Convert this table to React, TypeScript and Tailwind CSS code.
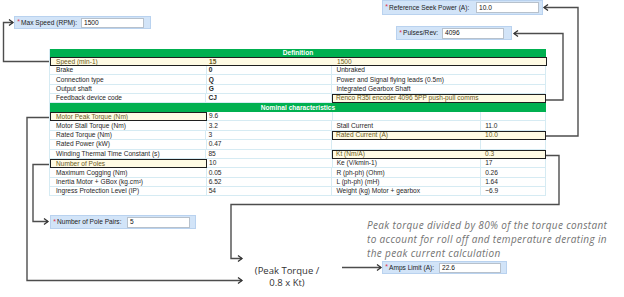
import React from 'react';

type Cell = { t: string; cls: string; b?: boolean };
type Seg = { hl?: boolean; cells: Cell[] };

const C1 = 'w-[157px] pl-[6px]';
const C2 = 'w-[126px] pl-[2px]';
const C3 = 'w-[149px] pl-[4px]';
const C4 = 'w-[65px] pl-[4px]';
const C34 = 'w-[214px] pl-[4px]';

const definition: Seg[][] = [
  [{ hl: true, cells: [{ t: 'Speed (min-1)', cls: C1 }, { t: '15', cls: C2, b: true }, { t: '1500', cls: C34 }] }],
  [{ cells: [{ t: 'Brake', cls: C1 }, { t: '0', cls: C2, b: true }, { t: 'Unbraked', cls: C34 }] }],
  [{ cells: [{ t: 'Connection type', cls: C1 }, { t: 'Q', cls: C2, b: true }, { t: 'Power and Signal flying leads (0.5m)', cls: C34 }] }],
  [{ cells: [{ t: 'Output shaft', cls: C1 }, { t: 'G', cls: C2, b: true }, { t: 'Integrated Gearbox Shaft', cls: C34 }] }],
  [
    { cells: [{ t: 'Feedback device code', cls: C1 }, { t: 'CJ', cls: C2, b: true }] },
    { hl: true, cells: [{ t: 'Renco R35i encoder 4096 5PP push-pull comms', cls: C34 }] },
  ],
];

// [label, value, label2, value2, highlight]
const nominal: [string, string, string, string, '' | 'a' | 'b'][] = [
  ['Motor Peak Torque (Nm)', '9.6', '', '', 'a'],
  ['Motor Stall Torque (Nm)', '3.2', 'Stall Current', '11.0', ''],
  ['Rated Torque (Nm)', '3', 'Rated Current (A)', '10.0', 'b'],
  ['Rated Power (kW)', '0.47', '', '', ''],
  ['Winding Thermal Time Constant (s)', '85', 'Kt (Nm/A)', '0.3', 'b'],
  ['Number of Poles', '10', 'Ke (V/kmin-1)', '17', 'a'],
  ['Maximum Cogging (Nm)', '0.05', 'R (ph-ph) (Ohm)', '0.26', ''],
  ['Inertia Motor + GBox (kg.cm²)', '6.52', 'L (ph-ph) (mH)', '1.64', ''],
  ['Ingress Protection Level (IP)', '54', 'Weight (kg) Motor + gearbox', '~6.9', ''],
];

function toSegs([a, b, c, d, hl]: (typeof nominal)[number]): Seg[] {
  const c1 = { t: a, cls: C1 };
  const c2 = { t: b, cls: C2 };
  const c3 = { t: c, cls: C3 };
  const c4 = { t: d, cls: C4 };
  if (hl === 'a') return [{ hl: true, cells: [c1] }, { cells: [c2, c3, c4] }];
  if (hl === 'b') return [{ cells: [c1, c2] }, { hl: true, cells: [c3, c4] }];
  return [{ cells: [c1, c2, c3, c4] }];
}

function Row({ segs, h }: { segs: Seg[]; h: string }) {
  return (
    <div className={`flex ${h}`}>
      {segs.map((s, i) =>
        s.hl ? (
          <div
            key={i}
            className="relative z-10 flex bg-[#fffbe4] text-[#6b5a22] outline-solid outline-1 outline-[#1f1f1f] -outline-offset-1"
          >
            {s.cells.map((c, j) => (
              <div key={j} className={`flex items-center whitespace-nowrap ${c.cls} ${c.b ? 'font-bold' : ''}`}>
                {c.t}
              </div>
            ))}
          </div>
        ) : (
          s.cells.map((c, j) => (
            <div
              key={`${i}-${j}`}
              className={`flex items-center whitespace-nowrap border-r border-b border-[#d6ebf3] ${c.cls} ${c.b ? 'font-bold' : ''}`}
            >
              {c.t}
            </div>
          ))
        )
      )}
    </div>
  );
}

function Field({ pos, label, value, input }: { pos: string; label: string; value: string; input: string }) {
  return (
    <div
      className={`absolute flex items-center bg-[#d2e4f8] border border-[#b9d2ef] pl-[1px] font-['Liberation_Sans',Arial,sans-serif] ${pos}`}
    >
      <span className="w-[5px] text-[7px] leading-none text-[#e0304a] -translate-y-[1px] text-center">*</span>
      <span className="flex-1 whitespace-nowrap text-[6.6px] text-[#222]">{label}</span>
      <div className={`flex items-center bg-white border border-[#b7c1cc] pl-[2px] text-[6.6px] text-[#111] ${input}`}>
        {value}
      </div>
    </div>
  );
}

const right = (x: number, y: number) => `M${x - 4},${y - 3} L${x},${y} L${x - 4},${y + 3}`;
const left = (x: number, y: number) => `M${x + 4},${y - 3} L${x},${y} L${x + 4},${y + 3}`;

function Connectors() {
  const lines = [
    'M49,61.5 H3.5 V22.5 H13',
    'M546,136 H578 V7.5 H544',
    'M546,100 H563 V33.5 H514',
    'M49,117.5 H27 V280.5 H242',
    'M49,164.5 H33 V221.5 H48',
    'M546,155.5 H559 V204.5 H231 V258.5 H242',
    'M342,267.5 H381',
  ];
  const heads = [right(13, 22.5), left(544, 7.5), left(514, 33.5), right(242, 280.5), right(48, 221.5), right(242, 258.5), right(381, 267.5)];
  return (
    <svg className="pointer-events-none absolute left-0 top-0 z-20" width="624" height="297" viewBox="0 0 624 297" fill="none">
      {lines.map((d, i) => (
        <path key={i} d={d} stroke="#4d4d4d" strokeWidth="1.4" />
      ))}
      {heads.map((d, i) => (
        <path key={`h${i}`} d={d} stroke="#333" strokeWidth="1.3" />
      ))}
    </svg>
  );
}

export default function App(): React.ReactElement {
  return (
    <div className="relative h-[297px] w-[624px] overflow-hidden bg-white">
      <div className="pl-[49px] pt-[49px]">
        <div className="w-[497px] border-l border-[#d6ebf3] font-['Liberation_Sans',Arial,sans-serif] text-[6.6px] text-[#262626]">
          <div className="flex h-[8px] items-center justify-center bg-[#00b050] font-bold text-white">Definition</div>
          {definition.map((segs, i) => (
            <Row key={i} segs={segs} h="h-[9.2px]" />
          ))}
          <div className="flex h-[9px] items-center justify-center bg-[#00b050] font-bold text-white">
            Nominal characteristics
          </div>
          {nominal.map((r, i) => (
            <Row key={i} segs={toSegs(r)} h="h-[9.4px]" />
          ))}
        </div>
      </div>

      <Field pos="left-[14px] top-[16px] w-[137px] h-[13px] pr-[6px]" label="Max Speed (RPM):" value="1500" input="w-[63px] h-[10px]" />
      <Field pos="left-[382px] top-[0px] w-[161px] h-[15px] pr-[3px]" label="Reference Seek Power (A):" value="10.0" input="w-[63px] h-[11px]" />
      <Field pos="left-[396px] top-[26px] w-[116px] h-[14px] pr-[7px]" label="Pulses/Rev:" value="4096" input="w-[62px] h-[11px]" />
      <Field pos="left-[50px] top-[215px] w-[146px] h-[14px] pr-[5px]" label="Number of Pole Pairs:" value="5" input="w-[63px] h-[11px]" />
      <Field pos="left-[382px] top-[261px] w-[125px] h-[13px] pr-[5px]" label="Amps Limit (A):" value="22.6" input="w-[62px] h-[10px]" />

      <p className="absolute left-[367px] top-[218px] whitespace-nowrap font-['Open_Sans',sans-serif] text-[10px] italic leading-[14px] tracking-[0.35px] text-[#737373]">
        Peak torque divided by 80% of the torque constant
        <br />
        to account for roll off and temperature derating in
        <br />
        the peak current calculation
      </p>

      <p className="absolute left-[246px] top-[265px] w-[82px] text-center font-['Open_Sans',sans-serif] text-[9.5px] leading-[12px] text-[#333]">
        (Peak Torque /
        <br />
        0.8 x Kt)
      </p>

      <Connectors />
    </div>
  );
}
